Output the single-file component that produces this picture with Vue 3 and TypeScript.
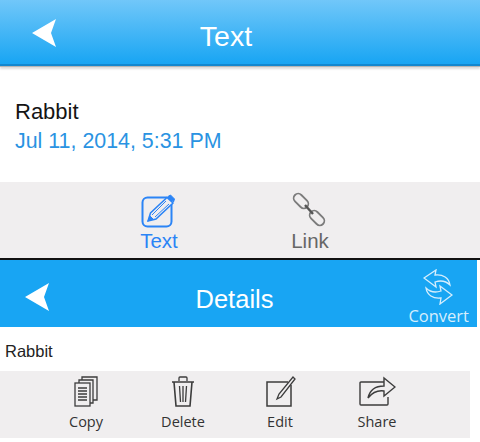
<template>
  <div class="page">
    <header class="top-bar">
      <svg class="back" width="26" height="28" viewBox="0 0 26 28"><path d="M0 14 L24 0 L19 14 L24 28 Z" fill="#fff" /></svg>
      <span class="top-title">Text</span>
    </header>

    <section class="note">
      <div class="note-title">Rabbit</div>
      <div class="note-date">Jul 11, 2014, 5:31 PM</div>
    </section>

    <nav class="tabs">
      <div class="tab active">
        <svg width="36" height="34" viewBox="0 0 36 34" fill="none" stroke="#2b84f6">
          <rect x="1.5" y="3.5" width="29" height="29" rx="5" stroke-width="2" />
          <path d="M7 27 L9.5 19 L26 3.5 L32 9 L15 25 Z" fill="#f0eeef" stroke-width="1.5" />
          <path d="M11 21 L25 7 M14 23 L28 10" stroke-width="1" />
          <path d="M7 27 L9 22 L12 25 Z" fill="#2b84f6" stroke-width="1" />
          <path d="M27 2.5 L29.5 1 L33.5 5 L32.5 8 Z" fill="#2b84f6" stroke-width="1" />
        </svg>
        <span>Text</span>
      </div>
      <div class="tab">
        <svg width="36" height="36" viewBox="0 0 36 36" fill="none" stroke="#7b7b7b" stroke-width="1.8">
          <rect x="-8.5" y="-4.5" width="17" height="9" rx="4.5" transform="translate(9 9) rotate(45)" />
          <rect x="-8.5" y="-4.5" width="17" height="9" rx="4.5" transform="translate(25 26) rotate(45)" />
          <path d="M13 13 L21 22" stroke="#555" stroke-width="2.4" />
        </svg>
        <span>Link</span>
      </div>
    </nav>

    <header class="detail-bar">
      <svg class="back" width="26" height="28" viewBox="0 0 26 28"><path d="M0 14 L24 0 L19 14 L24 28 Z" fill="#fff" /></svg>
      <span class="detail-title">Details</span>
      <div class="convert">
        <svg width="30" height="36" viewBox="0 0 30 36" fill="none" stroke="#d6eefd" stroke-width="1.3">
          <path d="M1 9 L13 1 L12 6 C20 5 26 9 27 16 C23 12 18 11 12 13 L13 18 Z" />
          <path d="M29 26 L17 35 L18 29 C10 30 4 26 3 19 C7 23 12 24 18 22 L17 17 Z" />
        </svg>
        <span>Convert</span>
      </div>
    </header>

    <div class="detail-name">Rabbit</div>

    <div class="toolbar">
      <div class="tool">
        <svg width="24" height="32" viewBox="0 0 24 32" fill="none" stroke="#3c3c3c" stroke-width="1.3">
          <path d="M8 4 V1 H23 V24 H19" />
          <path d="M5 7 V4 H19 V27 H16" />
          <rect x="1" y="7" width="15" height="23" fill="#f0eeef" />
          <path d="M4 12 H13 M4 15 H13 M4 18 H13 M4 21 H13 M4 24 H13" />
        </svg>
        <span>Copy</span>
      </div>
      <div class="tool">
        <svg width="24" height="32" viewBox="0 0 24 32" fill="none" stroke="#3c3c3c" stroke-width="1.3">
          <path d="M1 6 H23 M8 5 V2 Q8 1 9 1 H15 Q16 1 16 2 V5" />
          <path d="M3 6 L5 30 H19 L21 6" stroke-width="1.6" />
          <path d="M8.5 10 L9.5 26 M12 10 V26 M15.5 10 L14.5 26" />
        </svg>
        <span>Delete</span>
      </div>
      <div class="tool">
        <svg width="32" height="32" viewBox="-2 0 32 32" fill="none" stroke="#3c3c3c">
          <path d="M25 9 V30 H1 V6 H22" stroke-width="1.5" />
          <path d="M11 23 L13 18 L27 1 L29 3 L15 21 Z" stroke-width="1.3" fill="#f0eeef" />
        </svg>
        <span>Edit</span>
      </div>
      <div class="tool">
        <svg width="38" height="32" viewBox="0 0 38 32" fill="none" stroke="#3c3c3c" stroke-width="1.4">
          <path d="M27 6 H3 Q2 6 2 7 V28 Q2 29 3 29 H29 Q30 29 30 28 V21" />
          <path d="M10 22 C12 13 18 10 26 10 V2 L37 11 L26 20 V15 C19 14 14 17 10 22 Z" fill="#f0eeef" />
        </svg>
        <span>Share</span>
      </div>
    </div>
  </div>
</template>

<script setup lang="ts">
</script>

<style>
html, body {
  margin: 0;
  background: #fff;
}
</style>

<style scoped>
.page {
  width: 480px;
  height: 442px;
  overflow: hidden;
  background: #fff;
  font-family: "Liberation Sans", Arial, sans-serif;
}

.top-bar {
  height: 64px;
  display: flex;
  align-items: center;
  justify-content: center;
  position: relative;
  background: linear-gradient(#71c7f9, #18a5f3);
  border-bottom: 2px solid #1287cf;
  box-shadow: 0 1px 0 #b5b5b5, 0 3px 2px #dcdcdc;
}

.back {
  position: absolute;
  left: 32px;
  top: 19px;
}

.top-title {
  color: #fff;
  font-size: 28.5px;
  margin-right: 28px;
  margin-top: 8px;
}

.note {
  height: 116px;
  padding: 33px 15px 0;
  box-sizing: border-box;
}

.note-title {
  font-size: 22px;
  line-height: 26px;
  color: #141414;
}

.note-date {
  font-size: 21.4px;
  line-height: 32px;
  color: #2a93e2;
}

.tabs {
  height: 76px;
  background: #f0eeef;
  display: flex;
  border-bottom: 2px solid #111;
  padding-left: 116px;
  box-sizing: content-box;
}

.tab {
  width: 86px;
  margin-right: 65px;
  display: flex;
  flex-direction: column;
  align-items: center;
  padding-top: 10px;
  color: #666;
  font-size: 20.5px;
  line-height: 22px;
}

.tab svg {
  margin-bottom: 2px;
}

.tab.active {
  color: #2b84f6;
}

.tab.active svg {
  margin-top: 2px;
}

.detail-bar {
  width: 477px;
  height: 67px;
  background: #18a5f3;
  display: flex;
  align-items: center;
  justify-content: center;
  position: relative;
  box-sizing: border-box;
}

.detail-bar .back {
  left: 25px;
  top: 23px;
}

.detail-title {
  color: #fff;
  font-size: 25.5px;
  margin-right: 8px;
  margin-top: 11px;
}

.convert {
  position: absolute;
  right: 8px;
  top: 9px;
  display: flex;
  flex-direction: column;
  align-items: center;
  color: #d6eefd;
  font-family: "Open Sans", sans-serif;
  font-size: 16.5px;
  line-height: 22px;
}

.convert svg {
  margin-left: -2px;
}

.detail-name {
  height: 44px;
  padding: 14px 5px 0;
  box-sizing: border-box;
  font-size: 16.5px;
  line-height: 20px;
  color: #222;
}

.toolbar {
  width: 470px;
  height: 67px;
  background: #f0eeef;
  display: flex;
  padding-left: 50px;
  box-sizing: border-box;
}

.tool {
  width: 72px;
  margin-right: 25px;
  display: flex;
  flex-direction: column;
  align-items: center;
  padding-top: 5px;
  color: #333;
  font-family: "Open Sans", sans-serif;
  font-size: 14.5px;
  line-height: 19px;
}

.tool svg {
  margin-bottom: 4px;
}
</style>
